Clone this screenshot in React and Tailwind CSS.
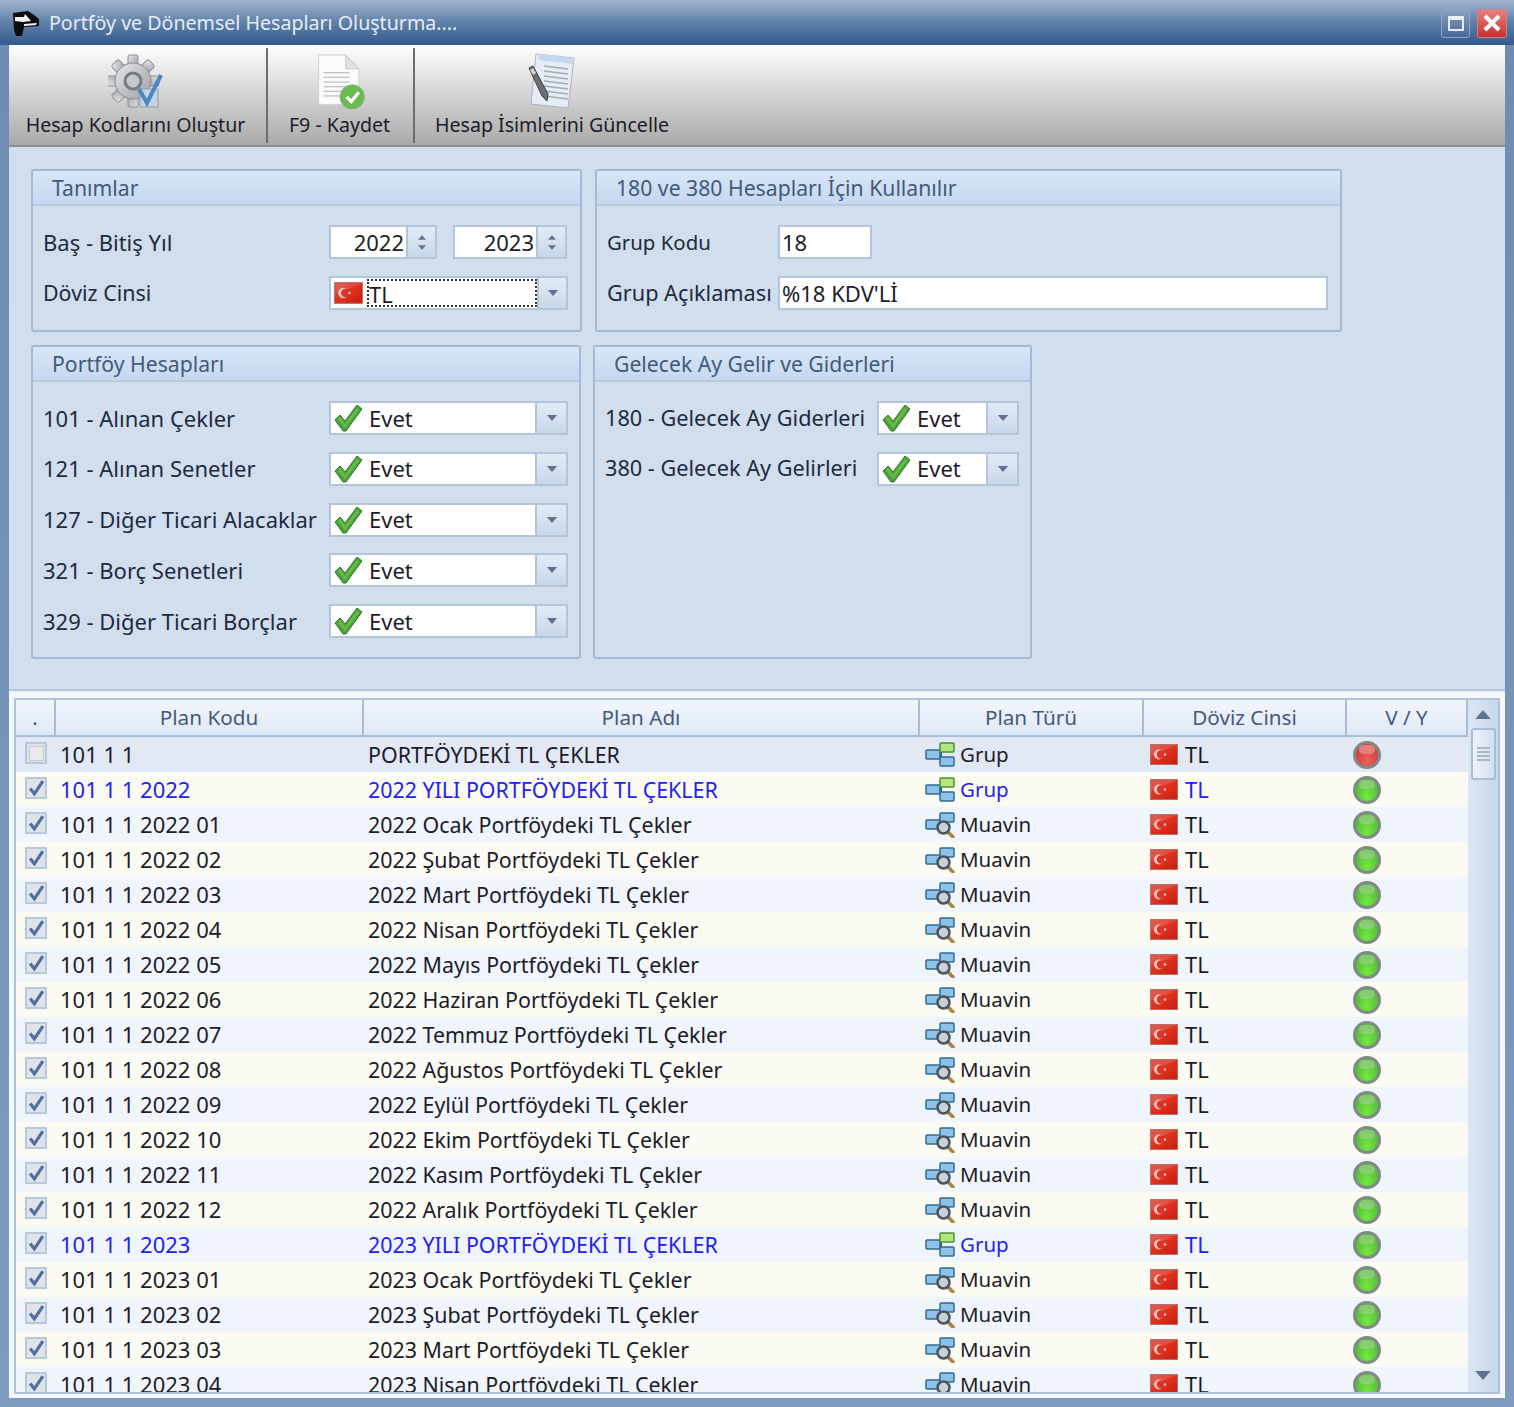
import React from 'react';

const font = "font-['Noto_Sans','Open_Sans',sans-serif]";

// Data for grid rows
const months2022 = ['Ocak', 'Şubat', 'Mart', 'Nisan', 'Mayıs', 'Haziran', 'Temmuz', 'Ağustos', 'Eylül', 'Ekim', 'Kasım', 'Aralık'];
const months2023 = ['Ocak', 'Şubat', 'Mart', 'Nisan'];
const pad = (n) => String(n).padStart(2, '0');

const rows = [
  { code: '101 1 1', name: 'PORTFÖYDEKİ TL ÇEKLER', type: 'Grup', off: true },
  { code: '101 1 1 2022', name: '2022 YILI PORTFÖYDEKİ TL ÇEKLER', type: 'Grup', blue: true },
  ...months2022.map((m, i) => ({ code: `101 1 1 2022 ${pad(i + 1)}`, name: `2022 ${m} Portföydeki TL Çekler`, type: 'Muavin' })),
  { code: '101 1 1 2023', name: '2023 YILI PORTFÖYDEKİ TL ÇEKLER', type: 'Grup', blue: true },
  ...months2023.map((m, i) => ({ code: `101 1 1 2023 ${pad(i + 1)}`, name: `2023 ${m} Portföydeki TL Çekler`, type: 'Muavin' })),
];

const Flag = ({ className = '' }) => (
  <svg viewBox="0 0 28 21" className={className}>
    <defs>
      <linearGradient id="flagBg" x1="0" y1="0" x2="1" y2="1">
        <stop offset="0" stopColor="#d8483c" />
        <stop offset="0.5" stopColor="#e0301e" />
        <stop offset="1" stopColor="#c41c0e" />
      </linearGradient>
    </defs>
    <rect x="0.5" y="0.5" width="27" height="20" fill="url(#flagBg)" stroke="#b8706a" />
    <path d="M1 1 H27 L1 12 Z" fill="#fff" opacity="0.12" />
    <circle cx="9" cy="10.5" r="5" fill="#f2c4be" />
    <circle cx="11" cy="10.5" r="4.2" fill="#d9352a" />
    <circle cx="15" cy="10.5" r="1.2" fill="#f2c4be" />
  </svg>
);

const Check = () => (
  <svg viewBox="0 0 30 30" className="w-[30px] h-[30px] shrink-0">
    <path d="M2 17 L7 12 L12 18 L24 2 L29 6 L13 28 L10 28 Z" fill="#4ea33a" stroke="#2f7a2a" strokeWidth="1" strokeLinejoin="round" />
    <path d="M5 16 L7 14 L12 21 L24 5 L26 6.5 L12 25 Z" fill="#66bd4c" />
  </svg>
);

const Arrow = ({ up, className = '' }) => (
  <svg viewBox="0 0 12 7" className={className}>
    <path d={up ? 'M6 0 L12 7 L0 7 Z' : 'M0 0 L12 0 L6 7 Z'} fill="#5f7290" />
  </svg>
);

const GroupIcon = () => (
  <svg viewBox="0 0 30 26" className="w-[30px] h-[26px] shrink-0">
    <path d="M12 12 H16 M16 6 V20 M16 6 H18 M16 20 H18" stroke="#2f5f78" strokeWidth="2" fill="none" />
    <rect x="1" y="8" width="14" height="9" rx="1" fill="#8fc2e8" stroke="#2f6c8f" strokeWidth="1.5" />
    <rect x="15" y="1" width="14" height="9" rx="1" fill="#b4e67e" stroke="#4c8f3a" strokeWidth="1.5" />
    <rect x="15" y="15" width="14" height="9" rx="1" fill="#8fc2e8" stroke="#2f6c8f" strokeWidth="1.5" />
  </svg>
);

const MuavinIcon = () => (
  <svg viewBox="0 0 30 26" className="w-[30px] h-[26px] shrink-0">
    <path d="M12 12 H16 M16 6 V14 M16 6 H18" stroke="#2f5f78" strokeWidth="2" fill="none" />
    <rect x="1" y="8" width="14" height="9" rx="1" fill="#8fc2e8" stroke="#2f6c8f" strokeWidth="1.5" />
    <rect x="15" y="1" width="14" height="9" rx="1" fill="#8fc2e8" stroke="#2f6c8f" strokeWidth="1.5" />
    <path d="M23 20 L28 25" stroke="#a98345" strokeWidth="3.5" strokeLinecap="round" />
    <circle cx="18.5" cy="15.5" r="6" fill="#c8d2d8" stroke="#4b555e" strokeWidth="2.5" />
  </svg>
);

const Led = ({ red }) => (
  <span className={`relative block w-[28px] h-[28px] rounded-full border-[3px] border-[#7f8a86] ${red ? 'bg-radial-[at_50%_80%] from-[#f0605a] to-[#c93a36]' : 'bg-radial-[at_50%_80%] from-[#72ea40] to-[#50ae3c]'}`}>
    <span className={`absolute left-[3px] right-[3px] top-[1px] h-[9px] rounded-full ${red ? 'bg-[#e9a3a0]' : 'bg-[#a3cf94]'} opacity-60`} />
  </span>
);

const GridCheck = ({ off }) => (
  <span className="flex items-center justify-center w-[22px] h-[22px] border-2 border-[#b6c8de] bg-[#e0e3e9]">
    {off ? (
      <span className="block w-[15px] h-[15px] border border-[#c9cdd2] bg-[#e9eaec]" />
    ) : (
      <svg viewBox="0 0 16 16" className="w-[17px] h-[17px]">
        <path d="M2 8 L6 13 L14 1" fill="none" stroke="#4f6f9f" strokeWidth="3" />
      </svg>
    )}
  </span>
);

const GearIcon = () => (
  <svg viewBox="0 0 56 58" className="w-[56px] h-[58px]">
    <defs>
      <linearGradient id="gear" x1="0" y1="0" x2="1" y2="1">
        <stop offset="0" stopColor="#e8e8e8" />
        <stop offset="1" stopColor="#9a9fa5" />
      </linearGradient>
    </defs>
    <g transform="translate(25 28)">
      {[0, 45, 90, 135, 180, 225, 270, 315].map((a) => (
        <rect key={a} x="-5" y="-26" width="10" height="12" rx="2" fill="url(#gear)" stroke="#8a8f95" transform={`rotate(${a})`} />
      ))}
      <circle r="18" fill="url(#gear)" stroke="#8a8f95" />
      <circle r="8" fill="#c4c9ce" stroke="#777c82" strokeWidth="3" />
    </g>
    <rect x="32" y="36" width="18" height="18" fill="#c9d3dd" stroke="#8ba0b6" />
    <path d="M31 36 L39 50 L53 22" fill="none" stroke="#4a86c8" strokeWidth="4" />
  </svg>
);

const DocIcon = () => (
  <svg viewBox="0 0 52 60" className="w-[50px] h-[56px] ml-[4px]">
    <path d="M1 1 H30 L44 16 V54 H1 Z" fill="#fbfbfb" stroke="#d0d0d0" />
    <path d="M30 1 V16 H44 Z" fill="#dfe3e8" stroke="#c4c8cc" />
    {[20, 25, 30, 35, 40, 45].map((y) => (
      <path key={y} d="M6 0 H34" transform={`translate(0 ${y})`} stroke="#c4c4c4" strokeWidth="1.5" />
    ))}
    <circle cx="37" cy="46" r="13" fill="#6bbb52" stroke="#8aae82" />
    <path d="M31 46 L36 51 L44 41" fill="none" stroke="#fff" strokeWidth="3.5" />
  </svg>
);

const PaperPenIcon = () => (
  <svg viewBox="0 0 52 60" className="w-[52px] h-[60px]">
    <path d="M10 2 L48 6 L42 56 L5 52 Z" fill="#e6edf7" stroke="#a9b4c2" />
    <path d="M13 2 L48 6 L47 12 L12 8 Z" fill="#c6d8ee" />
    {[14, 19, 24, 29, 34, 39, 44].map((y) => (
      <path key={y} d={`M18 ${y} L42 ${y + 3}`} stroke="#a2aab4" strokeWidth="1.5" />
    ))}
    <path d="M3 16 L7 14 L22 42 L21 49 L16 44 Z" fill="#6a7076" stroke="#3a3e42" />
    <path d="M4 18 L7 16 L10 21 L7 23 Z" fill="#d2d6da" />
  </svg>
);

const AppIcon = () => (
  <svg viewBox="0 0 28 28" className="w-[28px] h-[28px] shrink-0">
    <path d="M1 4 L16 2 L22 6 L27 10 L27 17 L12 18 L10 27 L4 27 L2 21 Z" fill="#0d0d0d" />
    <path d="M3 8 L12 8 L13 5 L19 12 L11 13 L3 12 Z" fill="#f3f3f3" />
    <path d="M12 15 L25 14 L24 16 L12 17 Z" fill="#f3f3f3" />
  </svg>
);

const ToolButton = ({ icon, label, className }) => (
  <div className={`flex flex-col items-center h-full pt-[7px] ${className}`}>
    <div className="h-[60px] flex items-center justify-center">{icon}</div>
    <span className="mt-[-2px] text-[19.6px] leading-[30px] text-[#1c1c2a] whitespace-nowrap">{label}</span>
  </div>
);

const Panel = ({ title, className, children }) => (
  <section className={`border-2 border-[#a6bad4] rounded-[3px] ${className}`}>
    <h2 className="h-[35px] pl-[19px] flex items-center text-[21.2px] font-normal text-[#43597a] border-b-2 border-[#b6cae2] bg-linear-to-b from-[#d8e6f8] to-[#c6d9f0]">
      {title}
    </h2>
    {children}
  </section>
);

const DropBtn = ({ w = 'w-[31px]' }) => (
  <span className={`${w} self-stretch flex items-center justify-center border-l-2 border-[#b4c5da] bg-linear-to-b from-[#e2ecf8] to-[#c8d8ea]`}>
    <Arrow className="w-[12px] h-[6px]" />
  </span>
);

const Combo = ({ className }) => (
  <div className={`flex items-center h-[34px] border-2 border-[#b4c5da] bg-white ${className}`}>
    <span className="ml-[2px] mr-[6px]"><Check /></span>
    <span className="flex-1 text-[22px] text-[#1c1c2a]">Evet</span>
    <DropBtn />
  </div>
);

const Spin = ({ value, className }) => (
  <div className={`flex items-center h-[34px] border-2 border-[#b4c5da] bg-white ${className}`}>
    <span className="flex-1 text-right pr-[2px] text-[22px] text-[#1c1c2a]">{value}</span>
    <span className="w-[29px] self-stretch flex flex-col items-center justify-center gap-[5px] border-l-2 border-[#b4c5da] bg-linear-to-b from-[#e2ecf8] to-[#c8d8ea]">
      <Arrow up className="w-[8px] h-[5px]" />
      <Arrow className="w-[8px] h-[5px]" />
    </span>
  </div>
);

const FormRow = ({ label, labelClass, labelSize = 'text-[22px]', children }) => (
  <div className="flex items-center h-[34px]">
    <span className={`shrink-0 ${labelSize} text-[#1d2a40] whitespace-nowrap ${labelClass}`}>{label}</span>
    {children}
  </div>
);

const portfolio = ['101 - Alınan Çekler', '121 - Alınan Senetler', '127 - Diğer Ticari Alacaklar', '321 - Borç Senetleri', '329 - Diğer Ticari Borçlar'];
const future = ['180 - Gelecek Ay Giderleri', '380 - Gelecek Ay Gelirleri'];

const headers = [
  ['.', 'w-[40px]'],
  ['Plan Kodu', 'w-[308px]'],
  ['Plan Adı', 'w-[556px]'],
  ['Plan Türü', 'w-[224px]'],
  ['Döviz Cinsi', 'w-[203px]'],
  ['V / Y', 'w-[121px]'],
];

const App = () => {
  return (
    <div className={`${font} w-[1514px] h-[1407px] flex flex-col overflow-hidden bg-linear-to-b from-[#6d8cb3] to-[#7f9cc0]`}>
      {/* Title bar */}
      <header className="h-[45px] shrink-0 flex items-center pl-[12px] pr-[7px] bg-linear-to-b from-[#a3b6cf] via-[#5f80a8] to-[#33598b]">
        <AppIcon />
        <span className="ml-[9px] text-[19.6px] text-[#e6edf6]">Portföy ve Dönemsel Hesapları Oluşturma....</span>
        <div className="ml-auto flex gap-[7px] mt-[1px]">
          <span className="w-[29px] h-[29px] flex items-center justify-center rounded-[3px] border border-[#8fa6c4] bg-linear-to-b from-[#8aa2c0] to-[#45689a]">
            <span className="block w-[16px] h-[15px] border-2 border-t-[4px] border-[#e8eef6]" />
          </span>
          <span className="w-[30px] h-[29px] flex items-center justify-center rounded-[2px] border border-[#c08a8a] bg-linear-to-b from-[#e88080] to-[#c9282a]">
            <svg viewBox="0 0 18 18" className="w-[18px] h-[18px]">
              <path d="M2 2 L16 16 M16 2 L2 16" stroke="#fff" strokeWidth="4" />
            </svg>
          </span>
        </div>
      </header>

      <div className="flex-1 flex flex-col mx-[9px] mb-[9px] min-h-0">
        {/* Toolbar */}
        <div className="h-[102px] shrink-0 flex items-center border-b-2 border-[#8f8f8f] bg-linear-to-b from-white to-[#aaaaaa]">
          <ToolButton icon={<GearIcon />} label="Hesap Kodlarını Oluştur" className="w-[257px] pr-[4px]" />
          <span className="w-[2px] h-[95px] bg-[#6e6e6e]" />
          <ToolButton icon={<DocIcon />} label="F9 - Kaydet" className="w-[145px] pr-[2px]" />
          <span className="w-[2px] h-[95px] bg-[#6e6e6e]" />
          <ToolButton icon={<PaperPenIcon />} label="Hesap İsimlerini Güncelle" className="w-[276px] pr-[2px]" />
        </div>

        {/* Definition panels */}
        <div className="h-[544px] shrink-0 flex flex-col gap-[13px] pt-[22px] pl-[22px] bg-[#d1deee] border-b-2 border-[#b7c8dc]">
          <div className="flex gap-[13px]">
            <Panel title="Tanımlar" className="w-[551px] h-[163px]">
              <div className="pt-[19px] flex flex-col gap-[17px]">
                <FormRow label="Baş - Bitiş Yıl" labelClass="w-[296px] pl-[10px]">
                  <Spin value="2022" className="w-[108px]" />
                  <Spin value="2023" className="w-[114px] ml-[16px]" />
                </FormRow>
                <FormRow label="Döviz Cinsi" labelSize="text-[21.4px]" labelClass="w-[296px] pl-[10px]">
                  <div className="flex items-center h-[34px] w-[239px] border-2 border-[#b4c5da] bg-white">
                    <Flag className="ml-[3px] w-[29px] h-[22px] shrink-0" />
                    <span className="ml-[4px] flex-1 h-[28px] leading-[26px] border-2 border-dotted border-[#333] text-[22px] text-[#1c1c2a]">TL</span>
                    <DropBtn w="w-[29px]" />
                  </div>
                </FormRow>
              </div>
            </Panel>
            <Panel title="180 ve 380 Hesapları İçin Kullanılır" className="w-[747px] h-[163px]">
              <div className="pt-[19px] flex flex-col gap-[17px]">
                <FormRow label="Grup Kodu" labelSize="text-[20.4px]" labelClass="w-[181px] pl-[10px]">
                  <span className="w-[94px] h-[34px] pl-[2px] border-2 border-[#b4c5da] bg-white text-[22px] leading-[30px] text-[#1c1c2a]">18</span>
                </FormRow>
                <FormRow label="Grup Açıklaması" labelSize="text-[21.7px]" labelClass="w-[181px] pl-[10px]">
                  <span className="w-[550px] h-[34px] pl-[2px] border-2 border-[#b4c5da] bg-white text-[22px] leading-[30px] text-[#1c1c2a]">%18 KDV'Lİ</span>
                </FormRow>
              </div>
            </Panel>
          </div>
          <div className="flex gap-[12px]">
            <Panel title="Portföy Hesapları" className="w-[550px] h-[314px]">
              <div className="pt-[19px] flex flex-col gap-[16.75px]">
                {portfolio.map((label) => (
                  <FormRow key={label} label={label} labelClass="w-[296px] pl-[10px]">
                    <Combo className="w-[239px]" />
                  </FormRow>
                ))}
              </div>
            </Panel>
            <Panel title="Gelecek Ay Gelir ve Giderleri" className="w-[439px] h-[314px]">
              <div className="pt-[19px] flex flex-col gap-[16.75px]">
                {future.map((label) => (
                  <FormRow key={label} label={label} labelSize="text-[21.7px]" labelClass="w-[282px] pl-[10px]">
                    <Combo className="w-[142px]" />
                  </FormRow>
                ))}
              </div>
            </Panel>
          </div>
        </div>

        {/* Grid */}
        <div className="flex-1 min-h-0 flex flex-col pt-[6px] pr-[5px] pb-[4px] pl-[5px] bg-[#f6f8fb] border-t border-[#e8edf4]">
          <div className="flex-1 min-h-0 flex border-2 border-[#b0c2d9] bg-[#eef3fa]">
            <div className="w-[1452px] flex flex-col min-h-0">
              <div className="h-[37px] shrink-0 flex border-b-2 border-[#a9bdd6] bg-linear-to-b from-[#f2f6fd] to-[#dfe9f6]">
                {headers.map(([title, w]) => (
                  <div key={title} className={`${w} h-full pt-[1px] flex items-center justify-center border-r-2 border-[#a9bdd6] text-[20.7px] text-[#46597a]`}>
                    {title}
                  </div>
                ))}
              </div>
              <div className="flex-1 min-h-0 overflow-hidden">
                {rows.map((r, i) => {
                  const bg = i === 0 ? 'bg-[#e2e9f5]' : i % 2 === 1 ? 'bg-[#fbfbf4]' : 'bg-[#f0f4fb]';
                  const text = r.blue ? 'text-[#2222f0]' : 'text-[#1c1c2a]';
                  return (
                    <div key={r.code} className={`h-[35px] flex items-center whitespace-nowrap ${bg} ${text}`}>
                      <div className="w-[40px] shrink-0 flex justify-center pb-[3px]"><GridCheck off={r.off} /></div>
                      <div className="w-[308px] shrink-0 pl-[4px] text-[22px]">{r.code}</div>
                      <div className="w-[556px] shrink-0 pl-[4px] pt-[1px] text-[21.4px]">{r.name}</div>
                      <div className="w-[224px] shrink-0 pl-[5px] flex items-center gap-[5px] text-[20.5px]">
                        {r.type === 'Grup' ? <GroupIcon /> : <MuavinIcon />}
                        <span>{r.type}</span>
                      </div>
                      <div className="w-[203px] shrink-0 pl-[6px] flex items-center gap-[7px] text-[22px]">
                        <Flag className="w-[28px] h-[21px] shrink-0" />
                        <span>TL</span>
                      </div>
                      <div className="w-[121px] shrink-0 pl-[6px]"><Led red={r.off} /></div>
                    </div>
                  );
                })}
              </div>
            </div>
            {/* Scrollbar */}
            <div className="flex-1 flex flex-col items-center bg-linear-to-r from-[#dbe6f3] to-[#c9d8ea]">
              <Arrow up className="w-[16px] h-[9px] mt-[10px]" />
              <div className="mt-[9px] w-[25px] h-[52px] flex flex-col items-center justify-center gap-[2px] rounded-[3px] border-2 border-[#a9bdd6] bg-linear-to-r from-[#edf3fb] to-[#d4e1f0]">
                <span className="block w-[13px] h-[2px] bg-[#a9b6c8]" />
                <span className="block w-[13px] h-[2px] bg-[#a9b6c8]" />
                <span className="block w-[13px] h-[2px] bg-[#a9b6c8]" />
                <span className="block w-[13px] h-[2px] bg-[#a9b6c8]" />
              </div>
              <Arrow className="w-[16px] h-[9px] mt-auto mb-[12px]" />
            </div>
          </div>
        </div>
      </div>
    </div>
  );
};

export default App;
